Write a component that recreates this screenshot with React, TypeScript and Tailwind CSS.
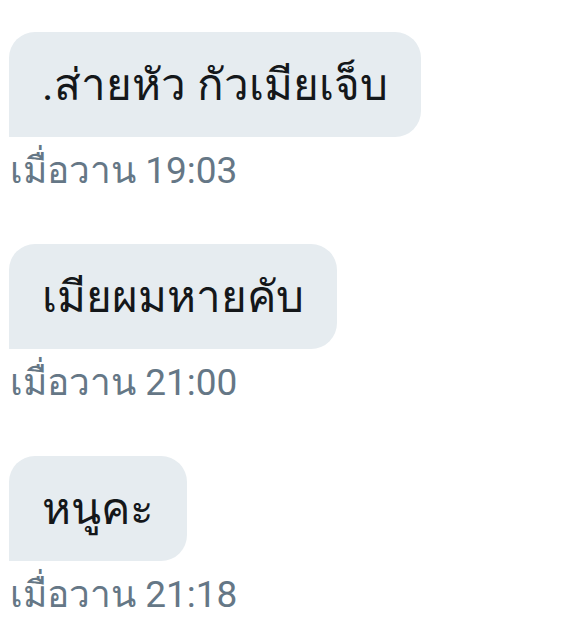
import React from 'react';

interface Message {
  text: string;
  time: string;
}

const messages: Message[] = [
  { text: '.ส่ายหัว กัวเมียเจ็บ', time: 'เมื่อวาน 19:03' },
  { text: 'เมียผมหายคับ', time: 'เมื่อวาน 21:00' },
  { text: 'หนูคะ', time: 'เมื่อวาน 21:18' },
];

export default function App() {
  return (
    <div className="w-[581px] h-[632px] bg-white overflow-hidden pl-[9px] pt-[32px] font-['Roboto','Noto_Sans',sans-serif]">
      <div className="flex flex-col items-start">
        {messages.map((m, i) => (
          <div key={i} className="flex flex-col items-start h-[212px]">
            <div className="h-[105px] flex items-center px-[33px] bg-[#e6ecf0] rounded-[26px] rounded-bl-none text-[44px] text-[#14171a] whitespace-nowrap">
              {m.text}
            </div>
            <div className="mt-[12px] text-[37px] leading-[44px] text-[#657786] whitespace-nowrap pl-[1px]">
              {m.time}
            </div>
          </div>
        ))}
      </div>
    </div>
  );
}
